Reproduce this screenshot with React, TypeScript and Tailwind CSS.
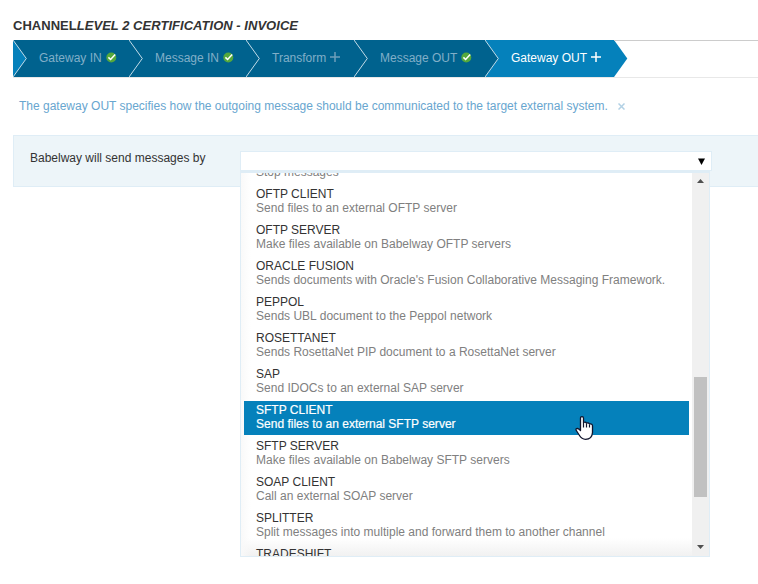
import React from 'react';

type Status = 'done' | 'add';

const steps: { label: string; status: Status; width: string; active?: boolean }[] = [
  { label: 'Gateway IN', status: 'done', width: 'w-[116px]' },
  { label: 'Message IN', status: 'done', width: 'w-[117px]' },
  { label: 'Transform', status: 'add', width: 'w-[108px]' },
  { label: 'Message OUT', status: 'done', width: 'w-[131px]' },
  { label: 'Gateway OUT', status: 'add', width: 'w-[129px]', active: true },
];

const options = [
  { name: 'OFTP CLIENT', text: 'Send files to an external OFTP server' },
  { name: 'OFTP SERVER', text: 'Make files available on Babelway OFTP servers' },
  { name: 'ORACLE FUSION', text: "Sends documents with Oracle's Fusion Collaborative Messaging Framework." },
  { name: 'PEPPOL', text: 'Sends UBL document to the Peppol network' },
  { name: 'ROSETTANET', text: 'Sends RosettaNet PIP document to a RosettaNet server' },
  { name: 'SAP', text: 'Send IDOCs to an external SAP server' },
  { name: 'SFTP CLIENT', text: 'Send files to an external SFTP server', selected: true },
  { name: 'SFTP SERVER', text: 'Make files available on Babelway SFTP servers' },
  { name: 'SOAP CLIENT', text: 'Call an external SOAP server' },
  { name: 'SPLITTER', text: 'Split messages into multiple and forward them to another channel' },
  { name: 'TRADESHIFT', text: '' },
];

function StatusIcon({ status, active }: { status: Status; active?: boolean }) {
  if (status === 'done') {
    return (
      <svg width="11" height="11" viewBox="0 0 11 11" className="ml-[4px] mt-[-3px] shrink-0">
        <circle cx="5.3" cy="5.5" r="5" fill="#55a83c" />
        <path d="M2.4 5.4 4.6 7.5 9.2 2.5" fill="none" stroke="#fff" strokeWidth="1.5" />
      </svg>
    );
  }
  return (
    <svg width="10" height="10" viewBox="0 0 10 10" className="ml-[4px] mt-[-4px] shrink-0">
      <path d="M5 0v10M0 5h10" fill="none" stroke={active ? '#fff' : '#6d9fba'} strokeWidth="1.5" />
    </svg>
  );
}

function Chevron({ left, right }: { left: string; right: string }) {
  return (
    <svg width="14" height="37" viewBox="0 0 14 37" className="shrink-0">
      <rect width="14" height="37" fill={right} />
      <path d="M0 0 13.3 18.5 0 37Z" fill={left} />
      <path d="M0 0 13.3 18.5 0 37" fill="none" stroke="#c3dce8" strokeWidth="1" />
    </svg>
  );
}

function Steps() {
  return (
    <nav className="flex h-[38px] border-b border-[#e8e8e8] text-[12px]">
      {steps.map((s, i) => (
        <div
          key={s.label}
          className={`flex h-[37px] shrink-0 items-center ${s.width} ${s.active ? 'bg-[#0581bb] text-white' : 'bg-[#00628e] text-[#81afc8]'}`}
        >
          <Chevron left={i === 0 ? '#0581bb' : '#00628e'} right={s.active ? '#0581bb' : '#00628e'} />
          <span className="ml-[12px] mt-[-2px] whitespace-nowrap">{s.label}</span>
          <StatusIcon status={s.status} active={s.active} />
        </div>
      ))}
      <svg width="14" height="37" className="shrink-0">
        <path d="M0 0 13.3 18.5 0 37Z" fill="#0581bb" />
      </svg>
      <div className="-ml-[14px] h-px flex-1 bg-[#ccc]" />
    </nav>
  );
}

function Dropdown() {
  return (
    <div className="flex h-[386px] w-[470px] border border-t-2 border-[#dfedf6] bg-white">
      <div className="h-full min-w-0 flex-1 overflow-hidden bg-[linear-gradient(to_right,#f9f9f9,#fff0_10px),linear-gradient(to_top,#f1f1f1,#fff_18px)] pl-[3px] pr-[3px]">
        <div className="-mt-[8px] h-[20px] pl-[12px] leading-[14px] text-[#808080]">Stop messages</div>
        {options.map((o) => (
          <div
            key={o.name}
            className={`mb-[2px] h-[34px] whitespace-nowrap pl-[12px] pt-[2px] leading-[14px] ${o.selected ? 'bg-[#0581bb] text-white [-webkit-text-stroke:0.2px_white]' : 'text-[#808080]'}`}
          >
            <div className={o.selected ? '' : 'text-[#333]'}>{o.name}</div>
            <div className="tracking-[0.01px]">{o.text}</div>
          </div>
        ))}
      </div>
      <div className="flex w-[17px] shrink-0 flex-col items-center bg-[#f0f0f0]">
        <svg width="7" height="4" className="mt-[6px]"><path d="M0 4 3.5 0 7 4Z" fill="#505050" /></svg>
        <div className="mt-[194px] h-[120px] w-[13px] bg-[#c1c1c1]" />
        <svg width="7" height="4" className="mt-[48px]"><path d="M0 0 3.5 4 7 0Z" fill="#505050" /></svg>
      </div>
    </div>
  );
}

function HandCursor() {
  return (
    <svg width="19" height="24" viewBox="0 0 19 24" className="absolute left-[575px] top-[416px]">
      <path
        d="M5.5 13.5V2.2Q5.5.7 7 .7T8.5 2.2V6.5Q10.8 5.6 11.5 7.2 13.5 6.3 14.5 8 17.5 7.5 17.5 10V16.5Q17 23.3 10.5 23.3 6.7 23.3 4.5 19.5L1 14Q.8 12.4 2.5 12.5 4 12.7 5.5 14.5Z"
        fill="#fff" stroke="#10142c" strokeWidth="1.3" strokeLinejoin="round"
      />
      <path d="M8.5 6.5v5M11.5 7.5v4M14.5 8.5v3" stroke="#10142c" strokeWidth="1.2" />
    </svg>
  );
}

export default function App() {
  return (
    <main className="relative h-[584px] w-[758px] overflow-hidden bg-white pl-[13px] font-['Liberation_Sans',Arial,sans-serif] text-[12px] text-[#333]">
      <h1 className="h-[40px] whitespace-nowrap pt-[18px] text-[13px] font-bold leading-[16px] tracking-[0.03px]">
        CHANNEL<em>LEVEL 2 CERTIFICATION - INVOICE</em>
      </h1>
      <Steps />
      <div className="flex h-[57px] items-start whitespace-nowrap pl-[6px] pt-[20px] leading-[16px] text-[#68a6cf]">
        <p>The gateway OUT specifies how the outgoing message should be communicated to the target external system.</p>
        <svg width="7" height="7" className="ml-[10px] mt-[5px]"><path d="M.5.5 6.5 6.5M6.5.5.5 6.5" stroke="#b2d1e5" strokeWidth="1.5" /></svg>
      </div>
      <section className="flex h-[52px] border border-r-0 border-[#dfedf6] bg-[#edf5f9] pl-[16px]">
        <label className="w-[210px] shrink-0 whitespace-nowrap pt-[14px] leading-[16px]">Babelway will send messages by</label>
        <div className="mt-[15px] w-[472px]">
          <div className="flex h-[20px] items-center justify-end border border-[#dfedf6] bg-white pr-[6px]">
            <svg width="7" height="7"><path d="M0 0.5H7L3.5 7Z" fill="#000" /></svg>
          </div>
          <Dropdown />
        </div>
      </section>
      <HandCursor />
    </main>
  );
}
